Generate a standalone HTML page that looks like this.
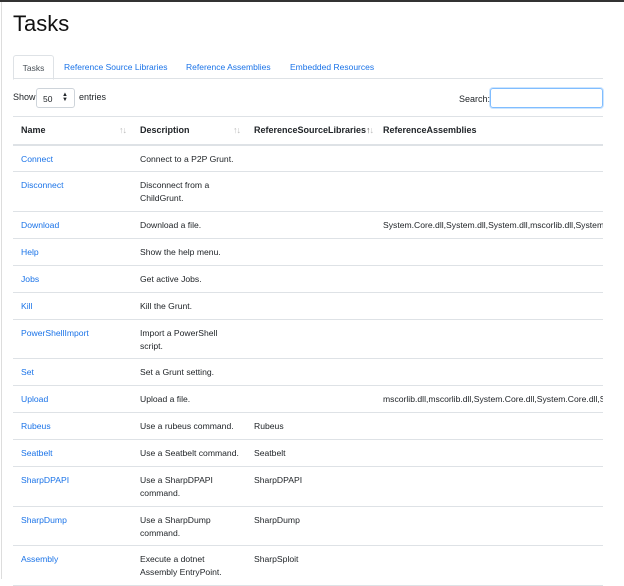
<!DOCTYPE html>
<html><head><meta charset="utf-8"><style>
*{margin:0;padding:0;box-sizing:border-box}
body{width:624px;height:579px;overflow:hidden;background:#fff;font-family:"Liberation Sans",sans-serif;color:#212529;font-size:9px;position:relative}
.top{position:absolute;left:0;top:0;width:624px;height:2px;background:#333}
.lb{position:absolute;left:1px;top:2px;width:1px;height:577px;background:#ddd}
h1{position:absolute;left:13px;top:11px;font-size:22px;font-weight:500;color:#111}
.tabs{position:absolute;left:13px;top:55px;width:590px;height:24px;border-bottom:1px solid #dee2e6}
.tab{position:absolute;top:0;height:24px;line-height:24px;font-size:8.5px;color:#1a73e8}
.tab.act{left:0;width:41px;border:1px solid #dee2e6;border-bottom:1px solid #fff;border-radius:3px 3px 0 0;color:#495057;text-align:center;height:25px}
.show{position:absolute;left:13px;top:92px;font-size:9px}
.sel{position:absolute;left:36px;top:88px;width:39px;height:20px;border:1px solid #ced4da;border-radius:3px;font-size:8.5px;padding:5px 0 0 6px}
.sel span{position:absolute;right:6px;top:4px;font-size:6px;line-height:5px}
.ent{position:absolute;left:79px;top:92px}
.srch{position:absolute;left:459px;top:94px}
.inp{position:absolute;left:490px;top:88px;width:113px;height:20px;border:1px solid #80bdff;border-radius:3px;box-shadow:0 0 0 1px rgba(0,123,255,.2)}
.tw{position:absolute;left:13px;top:116px;width:590px;overflow:hidden}
table{border-collapse:collapse;width:800px;table-layout:fixed}
td,th{padding:0 0 0 8px;vertical-align:top;text-align:left;white-space:nowrap;line-height:13px}
th{height:28px;border-top:1px solid #dee2e6;border-bottom:2px solid #dee2e6;vertical-align:middle;font-weight:bold;font-size:9px;position:relative}
th i{position:absolute;right:6px;top:7px;font-style:normal;color:#bbb;font-size:9px;letter-spacing:-1px}
td{border-bottom:1px solid #dee2e6;padding-top:7px;height:27px;font-size:8.6px}
tr.d td{height:39.5px}
td:first-child a{color:#1a73e8}
</style></head><body>
<div class="top"></div><div class="lb"></div>
<h1>Tasks</h1>
<div class="tabs">
<div class="tab act">Tasks</div>
<div class="tab" style="left:51px">Reference Source Libraries</div>
<div class="tab" style="left:173px">Reference Assemblies</div>
<div class="tab" style="left:277px">Embedded Resources</div>
</div>
<div class="show">Show</div>
<div class="sel">50<span>▲<br>▼</span></div>
<div class="ent">entries</div>
<div class="srch">Search:</div>
<div class="inp"></div>
<div class="tw"><table>
<colgroup><col style="width:119px"><col style="width:114px"><col style="width:129px"><col style="width:438px"></colgroup>
<tr><th>Name<i>↑↓</i></th><th>Description<i>↑↓</i></th><th>ReferenceSourceLibraries<i style="color:#666;right:2px">↑<span style="color:#bbb">↓</span></i></th><th>ReferenceAssemblies</th></tr>
<tr><td><a>Connect</a></td><td>Connect to a P2P Grunt.</td><td></td><td></td></tr>
<tr class="d"><td><a>Disconnect</a></td><td>Disconnect from a<br>ChildGrunt.</td><td></td><td></td></tr>
<tr><td><a>Download</a></td><td>Download a file.</td><td></td><td>System.Core.dll,System.dll,System.dll,mscorlib.dll,System.Core.dll</td></tr>
<tr><td><a>Help</a></td><td>Show the help menu.</td><td></td><td></td></tr>
<tr><td><a>Jobs</a></td><td>Get active Jobs.</td><td></td><td></td></tr>
<tr><td><a>Kill</a></td><td>Kill the Grunt.</td><td></td><td></td></tr>
<tr class="d"><td><a>PowerShellImport</a></td><td>Import a PowerShell<br>script.</td><td></td><td></td></tr>
<tr><td><a>Set</a></td><td>Set a Grunt setting.</td><td></td><td></td></tr>
<tr><td><a>Upload</a></td><td>Upload a file.</td><td></td><td>mscorlib.dll,mscorlib.dll,System.Core.dll,System.Core.dll,System.dll</td></tr>
<tr><td><a>Rubeus</a></td><td>Use a rubeus command.</td><td>Rubeus</td><td></td></tr>
<tr><td><a>Seatbelt</a></td><td>Use a Seatbelt command.</td><td>Seatbelt</td><td></td></tr>
<tr class="d"><td><a>SharpDPAPI</a></td><td>Use a SharpDPAPI<br>command.</td><td>SharpDPAPI</td><td></td></tr>
<tr class="d"><td><a>SharpDump</a></td><td>Use a SharpDump<br>command.</td><td>SharpDump</td><td></td></tr>
<tr class="d"><td><a>Assembly</a></td><td>Execute a dotnet<br>Assembly EntryPoint.</td><td>SharpSploit</td><td></td></tr>
</table></div>
</body></html>
